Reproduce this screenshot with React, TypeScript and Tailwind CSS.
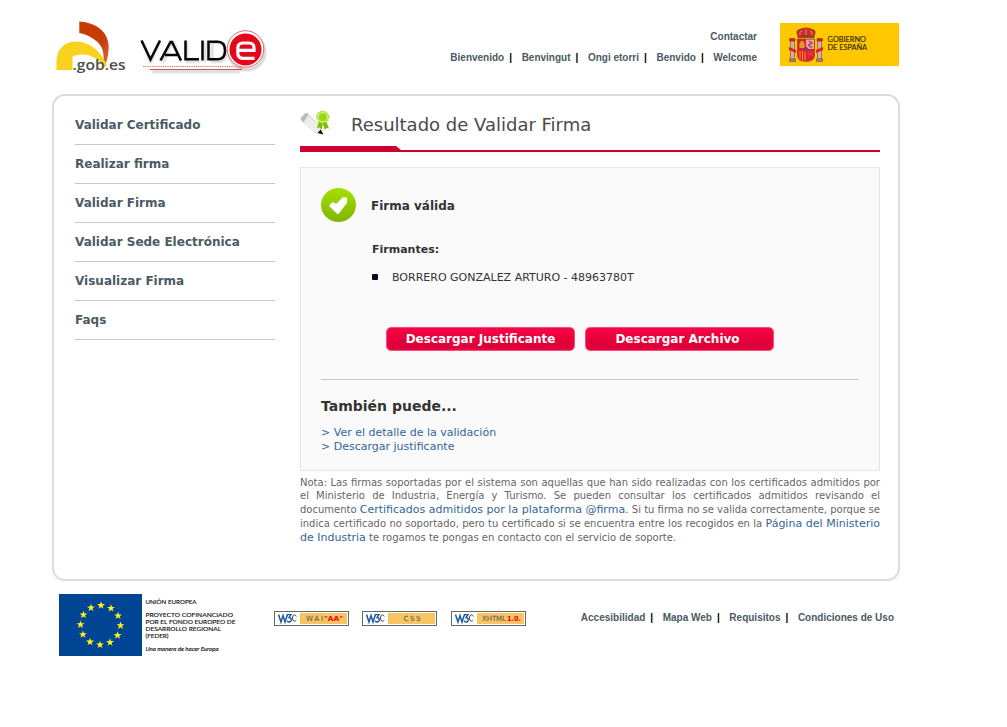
import React from "react";

const dejavu = "font-['DejaVu_Sans',sans-serif]";
const liberation = "font-['Liberation_Sans',sans-serif]";

function LinkBar({ items }: { items: string[] }) {
  return (
    <ul className={`flex ${liberation} text-[10px] leading-[14px] font-bold text-[#4b5a63]`}>
      {items.map((item, i) => (
        <li key={item} className="flex whitespace-nowrap">
          {i > 0 && <span className="ml-[5px] mr-[9.6px] w-[2.8px] text-black">|</span>}
          <a>{item}</a>
        </li>
      ))}
    </ul>
  );
}

function GobLogo() {
  return (
    <svg className="h-[60px] w-[80px]" viewBox="50 18 80 60">
      <defs>
        <linearGradient id="arc" x1="0" y1="0" x2="1" y2="1">
          <stop offset="0" stopColor="#c63c04" />
          <stop offset="0.6" stopColor="#c63c04" />
          <stop offset="1" stopColor="#dc7050" />
        </linearGradient>
      </defs>
      <path d="M79.300 21.500C92 22 107.500 29 108.600 45C109 54 107 61 104.500 67L102.500 67C105 56 103.500 47 97 41.500C91 36.500 85 34 79.300 33Z" fill="url(#arc)" />
      <path d="M56.500 70V60C57 49 65 41 76.500 41.500C90 42 101 51 107 65.500L104 66.500C97 57 86 51.500 72.500 56.500V70Z" fill="#f8d21c" />
      <text x="72.500" y="70" textLength="53" lengthAdjust="spacingAndGlyphs" fontFamily="Open Sans" fontSize="15" fontWeight="600" fill="#4d4d4d">.gob.es</text>
    </svg>
  );
}

function ValideLogo() {
  return (
    <svg className="h-[60px] w-[136px]" viewBox="134 18 136 60">
      <defs>
        <filter id="soft" x="-10%" y="-10%" width="120%" height="130%">
          <feGaussianBlur stdDeviation="0.900" />
        </filter>
      </defs>
      <g filter="url(#soft)" opacity="0.350">
        <circle cx="247" cy="52" r="17.500" fill="none" stroke="#777" strokeWidth="3" />
        <path d="M152 71.500H240" stroke="#777" strokeWidth="2.500" />
        <path d="M143 42L150.500 62L160 42M163 62L171.500 42H173L181 62M187 42V61.500H200M205 42V62M212 42V61.500H219Q226 61 226 52Q226 42.500 219 42.500H212" fill="none" stroke="#666" strokeWidth="2" />
      </g>
      <path d="M143 66.500H231Q238 66.500 243 68.500" fill="none" stroke="#cf7a75" strokeWidth="0.900" strokeDasharray="1.500 0.700" />
      <path d="M150 69.500H242" stroke="#c25a54" strokeWidth="1.200" />
      <circle cx="245.500" cy="49" r="18.300" fill="#fff" stroke="#d7605d" strokeWidth="0.900" />
      <circle cx="245.500" cy="49.500" r="16" fill="#e5061a" />
      <g fill="none" stroke="#050505" strokeWidth="2.500">
        <path d="M141.500 40.500L150.500 59.500L160 40.500" />
        <path d="M160.500 60.500L170.500 42H172L181 60.500M165 55H178.500" />
        <path d="M185.500 40.500V59.200H199" />
        <path d="M202.500 40.500V60.500" />
        <path d="M208.500 41.700H218Q225 41.700 225 50.500Q225 59.200 218 59.200H208.500Z" />
      </g>
      <path d="M238 50.300H254V48Q254 43 249 43H243Q237.800 43 237.800 48V53Q237.800 58.300 243 58.300H254.500" fill="none" stroke="#fff" strokeWidth="3.200" />
    </svg>
  );
}

function SpainLogo() {
  return (
    <svg className="h-[43px] w-[119px]" viewBox="0 0 119 43">
      <rect width="119" height="43" fill="#ffc700" />
      <g stroke="#a3332d" strokeWidth="0.600">
        <path d="M10.500 18H14.500V36H10.500ZM37.500 18H41.500V36H37.500Z" fill="#c5b4b0" />
        <path d="M9.500 36H15.500V38.500H9.500ZM36.500 36H42.500V38.500H36.500Z" fill="#8c8f9c" />
        <path d="M9.500 15.500H15V18H9.500ZM37 15.500H42.500V18H37Z" fill="#d5202a" />
      </g>
      <path d="M9 24L16 27V30L9 27ZM43 24L36 27V30L43 27Z" fill="#db1f2d" />
      <path d="M18 13Q15 7 20 6.500Q23 4.500 26 5.500Q29 4.500 32 6.500Q37 7 34 13Z" fill="#db2430" stroke="#6e3b17" strokeWidth="0.700" />
      <path d="M20 12Q19 8 22 8M26 12V6M32 12Q33 8 30 8" stroke="#e5b93b" strokeWidth="0.700" fill="none" />
      <path d="M17.500 12.500H34.500V15H17.500Z" fill="#8d4a20" />
      <path d="M26 5.500V4" stroke="#6e3b17" />
      <path d="M17.500 16H34.500V32Q34.500 38.500 26 38.500Q17.500 38.500 17.500 32Z" fill="#e2202d" stroke="#9e2430" strokeWidth="0.600" />
      <path d="M26 16.500H34V26H26Z" fill="#dca8ac" />
      <path d="M29 18L32 20L28.500 22L32 25" stroke="#c63a6b" strokeWidth="1.500" fill="none" />
      <path d="M19.500 25V20H20.500V18H23.500V20H24.500V25Z" fill="#d9a029" />
      <path d="M20 28V36M22.500 28V37.500M25 28V38" stroke="#f3a21c" strokeWidth="0.900" />
      <path d="M27.500 28L33 33M33 28L28 34M27.500 31H33" stroke="#b6656a" strokeWidth="0.600" />
      <circle cx="26" cy="26.500" r="2" fill="#48569b" stroke="#d41c2c" />
      <g fontFamily="Lato" fontSize="7" fill="#241c00" stroke="#241c00" strokeWidth="0.100">
        <text x="47.500" y="19" textLength="38.500" lengthAdjust="spacingAndGlyphs">GOBIERNO</text>
        <text x="47.500" y="26.800" textLength="39.500" lengthAdjust="spacingAndGlyphs">DE ESPAÑA</text>
      </g>
    </svg>
  );
}

function SignatureIcon() {
  return (
    <svg className="h-[27px] w-[32px]" viewBox="0 0 32 27">
      <defs>
        <linearGradient id="pen" x1="0" y1="1" x2="1" y2="0">
          <stop offset="0" stopColor="#aaa" />
          <stop offset="0.450" stopColor="#eee" />
          <stop offset="1" stopColor="#c5c5c5" />
        </linearGradient>
      </defs>
      <path d="M0.500 8.500L5 3.500Q7 2.500 8.500 4L22 16.500L22.500 23.500H16L1.500 11Q0 10 0.500 8.500Z" fill="url(#pen)" />
      <path d="M0.500 8.500L5 3.500Q7 2.500 8.500 4L3.500 12.500Z" fill="#b9b9b9" />
      <path d="M5 12L16 21.500M8.500 8L19 18M10 5L21 15.500" stroke="#fafafa" strokeWidth="0.900" />
      <path d="M21.500 18L23.300 24.200L15.500 23Z" fill="#f5edcf" />
      <path d="M20.800 19.500L23.300 24.500L17.500 23Z" fill="#111" />
      <path d="M19 12L16.800 18L19.500 17.500L22 19.500L22.700 13.500L24.800 20L26.500 18L29 18.500L26 11Z" fill="#7dbd06" />
      <circle cx="22.800" cy="7.200" r="5.800" fill="#d5f094" stroke="#9ed51d" strokeWidth="1.500" strokeDasharray="1.500 0.900" />
      <circle cx="22.800" cy="7.200" r="4" fill="#99d80a" />
    </svg>
  );
}

function EuLogo() {
  return (
    <svg className="h-[63px] w-[182px]" viewBox="0 0 182 63">
      <rect width="83" height="62" fill="#004494" />
      {Array.from({ length: 12 }, (_, i) => {
        const a = ((i * 30 + 1.5) * Math.PI) / 180;
        return (
          <path
            key={i}
            transform={`translate(${41.5 + 20 * Math.sin(a)} ${31 - 19.7 * Math.cos(a)})`}
            d="M0-4L1-1.200L4-1.200L1.600.600L2.500 3.400L0 1.700L-2.500 3.400L-1.600.600L-4-1.200L-1-1.200Z"
            fill="#fff01f"
          />
        );
      })}
      <g fontFamily="Lato" fontSize="6.500" fill="#111" stroke="#111" strokeWidth="0.150">
        <text x="86.500" y="9.900" textLength="51" lengthAdjust="spacingAndGlyphs">UNIÓN EUROPEA</text>
        <text x="86.500" y="23.400" textLength="87.500" lengthAdjust="spacingAndGlyphs">PROYECTO COFINANCIADO</text>
        <text x="86.500" y="30.200" textLength="90" lengthAdjust="spacingAndGlyphs">POR EL FONDO EUROPEO DE</text>
        <text x="86.500" y="36.900" textLength="75.500" lengthAdjust="spacingAndGlyphs">DESARROLLO REGIONAL</text>
        <text x="86.500" y="43.600" textLength="23" lengthAdjust="spacingAndGlyphs">(FEDER)</text>
        <text x="86.500" y="56.800" fontStyle="italic" fontSize="6" textLength="73" lengthAdjust="spacingAndGlyphs">Una manera de hacer Europa</text>
      </g>
    </svg>
  );
}

function W3cBadge({ label, red, x, w, rx, rw }: { label: string; red?: string; x: number; w: number; rx?: number; rw?: number }) {
  return (
    <svg className="h-[15px] w-[75px]" viewBox="0 0 75 15">
      <rect x="0.500" y="0.500" width="74" height="14" fill="#fff" stroke="#666" />
      <rect x="26" y="2" width="47" height="11" fill="#f8c562" />
      <g fill="none">
        <path d="M4.500 3.500L7 11L9 4.500L11 11L13.500 3.500" stroke="#1a5a9e" strokeWidth="1.500" />
        <path d="M13 3.700H17L15 6.500Q17.300 6.800 17.300 8.800Q17 11.200 14.800 11Q13.500 11 13 9.800" stroke="#1a5a9e" strokeWidth="1.300" />
        <path d="M22.300 5.500Q21.500 3.800 20.300 3.800Q18.500 4 18.500 7Q18.500 10 20.300 10.200Q21.500 10.200 22.300 9" stroke="#444" strokeWidth="1" />
      </g>
      <g fontFamily="DejaVu Sans" fontSize="7">
        <text x={x} y="10" textLength={w} fill="#5c5c5c" stroke="#5c5c5c" strokeWidth="0.100">{label}</text>
        {red && <text x={rx} y="10" textLength={rw} lengthAdjust="spacingAndGlyphs" fill="#f00022" fontWeight="bold">{red}</text>}
      </g>
    </svg>
  );
}

function RedButton({ children, className }: { children: React.ReactNode; className: string }) {
  return (
    <button className={`h-[24px] w-[189px] rounded-[5px] border border-[#f94b75] bg-linear-to-b from-[#fa0546] via-[#e7003b] to-[#d50038] text-[12px] leading-[22px] font-bold text-white shadow-[inset_0_0_3px_1px_#f8064a] ${className}`}>
      {children}
    </button>
  );
}

const menu = ["Validar Certificado", "Realizar firma", "Validar Firma", "Validar Sede Electrónica", "Visualizar Firma", "Faqs"];

export default function App() {
  return (
    <div className={`h-[727px] w-full overflow-hidden bg-white ${dejavu}`}>
      <div className="ml-[52px] w-[848px]">
        <header className="flex h-[94px] items-start">
          <div className="-ml-[2px] mt-[18px] flex gap-[4px]">
            <GobLogo />
            <ValideLogo />
          </div>
          <div className={`ml-auto mt-[30px] flex flex-col items-end gap-[7px] ${liberation}`}>
            <LinkBar items={["Contactar"]} />
            <LinkBar items={["Bienvenido", "Benvingut", "Ongi etorri", "Benvido", "Welcome"]} />
          </div>
          <div className="mr-[1px] ml-[23px] mt-[23px]">
            <SpainLogo />
          </div>
        </header>

        <div className="flex h-[487px] rounded-[13px] border-2 border-[#dcdcdc] pl-[21px]">
          <nav className="w-[200px] pt-[10px]">
            <ul>
              {menu.map((m) => (
                <li key={m} className="h-[39px] border-b border-[#c6c6c6] text-[12px] leading-[39px] font-bold text-[#4b5a63]">
                  {m}
                </li>
              ))}
            </ul>
          </nav>

          <main className="ml-[25px] w-[580px]">
            <div className="flex h-[50px] pt-[14px]">
              <SignatureIcon />
              <h1 className="ml-[19px] text-[18px] leading-[30px] text-[#4a4a4a]">Resultado de Validar Firma</h1>
            </div>
            <svg className="block h-[6px] w-[580px]" viewBox="0 0 580 6">
              <path d="M0 0H96L101 4H580V6H0Z" fill="#cc0033" />
            </svg>

            <section className="mt-[15px] h-[304px] border border-[#e4e4e4] bg-[#fafafa] px-[20px] pt-[20px] text-[#333]">
              <div className="flex h-[35px] items-center">
                <svg className="h-[35px] w-[35px]" viewBox="0 0 35 35">
                  <defs>
                    <linearGradient id="ok" x1="0" y1="0" x2="0" y2="1">
                      <stop offset="0" stopColor="#a6df00" />
                      <stop offset="1" stopColor="#80b400" />
                    </linearGradient>
                  </defs>
                  <ellipse cx="17.500" cy="17" rx="17.500" ry="17.100" fill="url(#ok)" />
                  <path d="M8.500 18.500Q8 17.500 9 16.500L11 14.500Q12 14 13 14.500L15 16L21.500 9.500L25.500 9.200Q26.300 9.500 26.200 10.500V14.500L18 25.500Q17 26.500 16 25.700Z" fill="#fff" />
                </svg>
                <h2 className="ml-[15px] text-[12px] leading-[16px] font-bold">Firma válida</h2>
              </div>
              <h3 className="mt-[19px] ml-[51px] text-[11px] leading-[16px] font-bold">Firmantes:</h3>
              <div className="mt-[12px] ml-[51px] flex items-start text-[11px] leading-[16px]">
                <span className="mr-[14px] mt-[4px] size-[6px] rounded-[1px] bg-[#020a24]" />
                BORRERO GONZALEZ ARTURO - 48963780T
              </div>
              <div className="mt-[41px] ml-[65px] flex gap-[10px]">
                <RedButton className="">Descargar Justificante</RedButton>
                <RedButton className="pr-[4px]">Descargar Archivo</RedButton>
              </div>
              <hr className="mt-[28px] border-[#c6c6c6]" />
              <h2 className="mt-[16px] text-[14px] leading-[20px] font-bold">También puede...</h2>
              <ul className="mt-[10px] text-[11px] leading-[14px] text-[#336699]">
                <li>&gt; Ver el detalle de la validación</li>
                <li>&gt; Descargar justificante</li>
              </ul>
            </section>

            <p className="mt-[5px] text-justify text-[10px] leading-[13px] text-[#666]">
              Nota: Las firmas soportadas por el sistema son aquellas que han sido realizadas con los certificados admitidos por el Ministerio de Industria, Energía y Turismo. Se pueden consultar los certificados admitidos revisando el documento{" "}
              <a className="text-[11px] leading-[15px] text-[#336699]">Certificados admitidos por la plataforma @firma.</a> Si tu firma no se valida correctamente, porque se indica certificado no soportado, pero tu certificado si se encuentra entre los recogidos en la{" "}
              <a className="text-[11px] leading-[14px] text-[#336699]">Página del Ministerio de Industria</a> te rogamos te pongas en contacto con el servicio de soporte.
            </p>
          </main>
        </div>

        <footer className="flex items-start pl-[7px]">
          <div className="mt-[13px]">
            <EuLogo />
          </div>
          <div className="mt-[30px] ml-[33px] flex">
            <W3cBadge label="WAI" x={32} w={17} red={'"AA"'} rx={50} rw={19} />
            <div className="ml-[13px]">
              <W3cBadge label="CSS" x={41.5} w={17} />
            </div>
            <div className="ml-[14px]">
              <W3cBadge label="XHTML" x={31} w={24} red="1.0." rx={56} rw={14} />
            </div>
          </div>
          <div className="mt-[30px] mr-[6px] ml-auto">
            <LinkBar items={["Accesibilidad", "Mapa Web", "Requisitos", "Condiciones de Uso"]} />
          </div>
        </footer>
      </div>
    </div>
  );
}
